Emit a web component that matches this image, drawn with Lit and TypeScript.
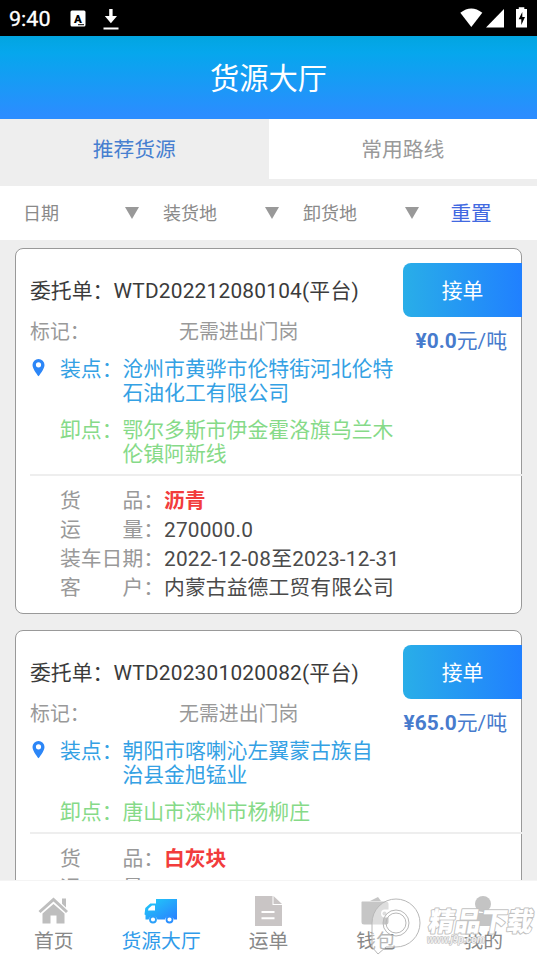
import { LitElement, html, css, svg, nothing } from "lit";
import { customElement, property } from "lit/decorators.js";

interface Cargo {
  no: string;
  price: string;
  from: string[];
  to: string[];
  goods: string;
  amount: string;
  dates?: string;
  client?: string;
}

const CARGOS: Cargo[] = [
  {
    no: "WTD202212080104(平台)",
    price: "0.0",
    from: ["沧州市黄骅市伦特街河北伦特", "石油化工有限公司"],
    to: ["鄂尔多斯市伊金霍洛旗乌兰木", "伦镇阿新线"],
    goods: "沥青",
    amount: "270000.0",
    dates: "2022-12-08至2023-12-31",
    client: "内蒙古益德工贸有限公司",
  },
  {
    no: "WTD202301020082(平台)",
    price: "65.0",
    from: ["朝阳市喀喇沁左翼蒙古族自", "治县金旭锰业"],
    to: ["唐山市滦州市杨柳庄"],
    goods: "白灰块",
    amount: "",
  },
];

@customElement("status-bar")
export class StatusBar extends LitElement {
  static styles = css`
    :host { display: block; height: 36px; background: #000; flex: none; overflow: hidden; }
    svg { display: block; }
    text { font-family: Roboto, sans-serif; }
    .badge { font-weight: 900; }
  `;
  render() {
    return html`<svg width="537" height="36" viewBox="0 0 537 36" fill="#fff">
      <text x="9" y="26" font-size="20.500" textLength="41.500" lengthAdjust="spacingAndGlyphs" stroke="#fff" stroke-width=".3">9:40</text>
      <rect x="70.500" y="10.500" width="15" height="16" rx="1.500" />
      <text class="badge" x="78" y="22.500" font-size="11.500" fill="#000" text-anchor="middle">A</text>
      <path d="M78 24.200h6v1h-6z" fill="#000" />
      <path d="M109.200 9h3.400v7h4.400l-6.100 7.200-6.100-7.200h4.400zM103.500 27.500h15v2h-15z" />
      <path d="M460.300 12.800Q471.300 4 482.300 12.800L471.300 27z" />
      <path d="M504 9v18.500H486z" />
      <path d="M518.800 9V7.200h5.500V9h2.700v18.500h-11V9z" />
      <path d="M522.300 12l-3.600 7.300h2.600v5.700l3.700-8h-2.700V12z" fill="#000" />
    </svg>`;
  }
}

@customElement("cargo-card")
export class CargoCard extends LitElement {
  @property({ attribute: false }) cargo!: Cargo;
  static styles = css`
    :host {
      display: block; box-sizing: border-box; background: #fff;
      border: 1px solid #999; border-radius: 8px;
      padding: 14px 0 10px 14px; font-size: 20.850px; line-height: 24px;
    }
    .top { display: flex; justify-content: space-between; height: 94px; }
    .info { width: 365px; padding-top: 1px; box-sizing: border-box; }
    .no { height: 54px; line-height: 54px; color: #3b3b3b; white-space: nowrap; }
    .no span { letter-spacing: .22px; }
    .mark { display: flex; height: 28px; line-height: 30px; font-size: 19.900px; color: #999; }
    .mark span { width: 149px; }
    .side { display: flex; flex-direction: column; align-items: flex-end; width: 119px; margin-right: -1px; flex: none; }
    .take {
      width: 119px; height: 54px; line-height: 57px; text-align: center; color: #fff;
      border-radius: 8px 0 0 8px; background: linear-gradient(90deg, #29aee8, #2080ff);
    }
    .price { margin: 11px 15px 0 0; line-height: 26px; color: #477bcd; white-space: nowrap; }
    .place { display: flex; white-space: nowrap; color: #34a1e4; }
    .pin { width: 30px; flex: none; }
    .place svg { display: block; margin: 2px 0 0 2px; }
    .label { width: 62.400px; flex: none; }
    .to { color: #86da88; margin-top: 13px; }
    .line { height: 2px; background: #eee; margin: 8px -1px 11px 0; }
    .row { display: flex; padding-left: 30px; height: 29px; line-height: 29px; color: #999; white-space: pre; font-size: 20.800px; }
    .row span { color: #4a4a4a; letter-spacing: .1px; }
    .row .num { letter-spacing: .22px; }
    .row b { color: #f23c3c; }
  `;
  render() {
    const c = this.cargo;
    return html`
      <div class="top">
        <div class="info">
          <div class="no">委托单：<span>${c.no}</span></div>
          <div class="mark"><span>标记：</span>无需进出门岗</div>
        </div>
        <div class="side">
          <div class="take">接单</div>
          <div class="price"><b>¥${c.price}</b>元/吨</div>
        </div>
      </div>
      <div class="place">
        <div class="pin">
          <svg width="13" height="18" viewBox="0 0 13 18">
            <path fill="#2c86f7" fill-rule="evenodd" d="M6.500 0a6 6 0 0 1 6 6C12.500 10.300 6.500 17.300 6.500 17.300S.5 10.300.5 6A6 6 0 0 1 6.500 0zm0 3.200a2.600 2.600 0 1 0 0 5.200 2.600 2.600 0 0 0 0-5.200z" />
          </svg>
        </div>
        <div class="label">装点：</div>
        <div>${c.from.map((t) => html`<div>${t}</div>`)}</div>
      </div>
      <div class="place to">
        <div class="pin"></div>
        <div class="label">卸点：</div>
        <div>${c.to.map((t) => html`<div>${t}</div>`)}</div>
      </div>
      <div class="line"></div>
      <div class="row">货　　品：<b>${c.goods}</b></div>
      <div class="row">运　　量：<span class="num">${c.amount}</span></div>
      ${c.dates ? html`<div class="row">装车日期：<span class="num">${c.dates}</span></div>` : nothing}
      ${c.client ? html`<div class="row">客　　户：<span>${c.client}</span></div>` : nothing}
    `;
  }
}

const ICONS = {
  home: svg`<path fill="#bebebe" d="M16.500 1.500 31 15l-2 2L16.500 5.500 3.500 17l-2-2zM25 2.500h4v9l-4-3.700zM16.500 8 27.500 17.500v10h-8v-8h-6v8H5.500V17.500z"/>`,
  truck: svg`<defs><linearGradient id="body" x1="0" y1="0" x2="1" y2="1"><stop offset="0" stop-color="#20d0f8"/><stop offset="1" stop-color="#2a7fff"/></linearGradient></defs>
    <path fill="url(#body)" fill-rule="evenodd" d="M12 3h21v20.500h-3.200a4.500 4.500 0 0 0-8.800 0h-7.600a4.500 4.500 0 0 0-8.800 0H1.500V19l-1-.5.8-6.500 5-4.500H12zM4 14.500h7V9.500H8L4.500 12.500z"/>
    <circle cx="9" cy="23.500" r="3" fill="#fff" stroke="#2aa0fa" stroke-width="1.800"/><circle cx="25.500" cy="23.500" r="3" fill="#fff" stroke="#2a90ff" stroke-width="1.800"/>`,
  doc: svg`<path fill="#c9c5c5" d="M3 0h17.500v9h9.500v21H3z"/><path fill="#c9c5c5" d="M21.500 0l8.500 8h-8.500z"/><path stroke="#fff" stroke-width="2" d="M9.500 16h13M9.500 22.300h13"/>`,
  wallet: svg`<path fill="#c6c6c6" d="M3 5.500h24a2.500 2.500 0 0 1 2.500 2.500v5.500H26a4 4 0 0 0 0 8h3.500V26a2.500 2.500 0 0 1-2.500 2.500H5A2.500 2.500 0 0 1 2.500 26V6zM11 5l8-4 3 4z"/><circle cx="25.500" cy="17.500" r="2" fill="#c6c6c6"/>`,
  user: svg`<circle cx="17" cy="8" r="8" fill="#c4c4c4"/><path fill="#c4c4c4" d="M5 30c0-8 3-12 6-13h12c3 1 6 5 6 13z"/>`,
};

@customElement("app-root")
export class AppRoot extends LitElement {
  static styles = css`
    :host {
      display: flex; flex-direction: column; position: relative; width: 537px; height: 956px;
      overflow: hidden; background: #eee; font-family: Roboto, "Noto Sans CJK SC", sans-serif;
    }
    header {
      height: 83px; flex: none; text-align: center; line-height: 86px; font-size: 29.300px; color: #fff;
      background: linear-gradient(#02a5e0, #06a7ed 20%, #2b8dff 95%);
    }
    .tabs { display: flex; height: 67px; flex: none; font-size: 20.800px; line-height: 63px; text-align: center; }
    .tabs div { flex: 1; height: 60px; color: #999; background: #fff; }
    .tabs .on { color: #477fd0; background: #eee; }
    .filters { display: flex; height: 54px; flex: none; background: #fff; font-size: 18px; line-height: 55px; color: #8a8a8a; padding-left: 23px; }
    .filter { display: flex; align-items: center; justify-content: space-between; width: 115.500px; margin-right: 24.500px; }
    .filter i { border: 7.500px solid transparent; border-top: 12px solid #999; border-bottom: 0; }
    .reset { color: #4169e1; font-size: 20.600px; margin-left: 7.500px; line-height: 57px; }
    main { flex: 1; min-height: 0; overflow: hidden; padding: 8px 15px 0; display: flex; flex-direction: column; gap: 16px; }
    cargo-card { flex: none; }
    nav { display: flex; height: 76px; flex: none; background: #fff; border-top: 1px solid #f4f4f4; box-sizing: border-box; }
    nav div { flex: 1; display: flex; flex-direction: column; align-items: center; font-size: 19.800px; line-height: 28px; color: #888; padding-top: 15px; }
    nav .on { color: #2f9bea; }
    nav svg { display: block; flex: none; margin-bottom: 2px; }
    .stamp { position: absolute; right: 0; bottom: 0; }
    .name { font-family: "Noto Sans CJK SC", sans-serif; font-weight: 900; }
    .site { font-family: "Liberation Sans", sans-serif; font-style: italic; font-weight: 700; }
  `;
  render() {
    return html`
      <status-bar></status-bar>
      <header>货源大厅</header>
      <div class="tabs"><div class="on">推荐货源</div><div>常用路线</div></div>
      <div class="filters">
        ${["日期", "装货地", "卸货地"].map((t) => html`<div class="filter">${t}<i></i></div>`)}
        <div class="reset">重置</div>
      </div>
      <main>${CARGOS.map((c) => html`<cargo-card .cargo=${c}></cargo-card>`)}</main>
      <nav>
        <div><svg width="34" height="30">${ICONS.home}</svg>首页</div>
        <div class="on"><svg width="34" height="30">${ICONS.truck}</svg>货源大厅</div>
        <div><svg width="34" height="30">${ICONS.doc}</svg>运单</div>
        <div><svg width="34" height="30">${ICONS.wallet}</svg>钱包</div>
        <div><svg width="34" height="30">${ICONS.user}</svg>我的</div>
      </nav>
      <svg class="stamp" width="172" height="66" viewBox="365 890 172 66">
        <path fill="#fff" fill-opacity=".4" stroke="#b8b8b8" fill-rule="evenodd"
          d="M372 923a24 24 0 1 1 24 24h-10l-8 7-6-7zM396 910a13 13 0 1 0 0 26 13 13 0 0 0 0-26z" />
        <circle cx="396" cy="923" r="10" fill="none" stroke="#b8b8b8" />
        <text class="name" transform="translate(427.500 931) skewX(-10)" font-size="26.500" textLength="104" lengthAdjust="spacingAndGlyphs"
          fill="#fff" stroke="#c2c2c2" stroke-width="2" paint-order="stroke" stroke-linejoin="round">精品下载</text>
        <text class="site" x="427" y="943" font-size="10.500" textLength="58" lengthAdjust="spacingAndGlyphs"
          fill="#fff" fill-opacity=".8" stroke="#b8b8b8" stroke-width="1.200" paint-order="stroke">www.j9p.com</text>
      </svg>
    `;
  }
}
